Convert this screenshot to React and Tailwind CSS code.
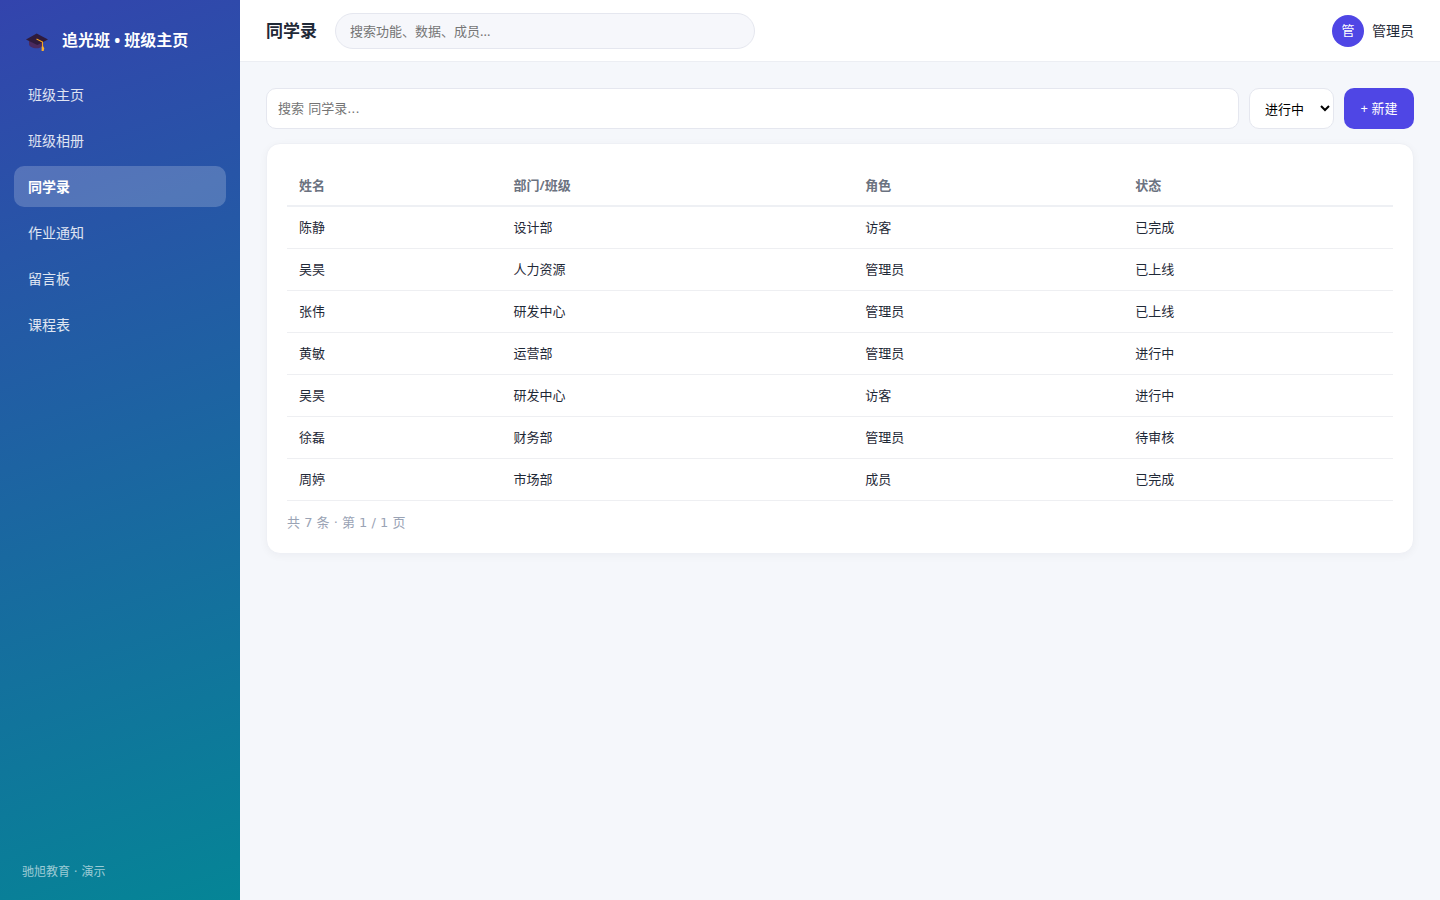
import { useState } from "react";

const NAV_ITEMS = [
  "班级主页",
  "班级相册",
  "同学录",
  "作业通知",
  "留言板",
  "课程表",
];

const COLUMNS = [
  { label: "姓名", className: "w-[19.4%]" },
  { label: "部门/班级", className: "w-[31.8%]" },
  { label: "角色", className: "w-[24.4%]" },
  { label: "状态", className: "w-[24.4%]" },
];

const ROWS = [
  ["陈静", "设计部", "访客", "已完成"],
  ["吴昊", "人力资源", "管理员", "已上线"],
  ["张伟", "研发中心", "管理员", "已上线"],
  ["黄敏", "运营部", "管理员", "进行中"],
  ["吴昊", "研发中心", "访客", "进行中"],
  ["徐磊", "财务部", "管理员", "待审核"],
  ["周婷", "市场部", "成员", "已完成"],
];

function GraduationCapIcon({ className }) {
  return (
    <svg className={className} viewBox="0 -2 24 22" aria-hidden="true">
      <path d="M4 9v4c0 2.6 3.5 4.2 7.5 4.2S18 15.6 18 13V9z" fill="#4b2a5e" />
      <path d="M1 8.5 11.7 2.5 23 8.5 12.3 14z" fill="#2f1b3c" />
      <path
        d="M11.5 8 17.5 11v6"
        fill="none"
        stroke="#f5a623"
        strokeWidth="1.1"
        strokeLinejoin="round"
      />
      <path d="M16.700 15.500h1.700l.8 2-.6 3h-2z" fill="#fbb12d" />
    </svg>
  );
}

function Sidebar({ active, onSelect }) {
  return (
    <aside className="flex w-60 shrink-0 flex-col bg-[linear-gradient(160deg,#3344ad,#058596)] px-3.5 py-5 text-white">
      <div className="flex h-10 items-center gap-[13px] px-[11px]">
        <GraduationCapIcon className="h-[22px] w-6 shrink-0" />
        <span className="text-base font-bold whitespace-nowrap">
          追光班 • 班级主页
        </span>
      </div>

      <nav className="mt-3.5 flex flex-1 flex-col gap-[5px]">
        {NAV_ITEMS.map((item) => (
          <a
            key={item}
            href="#"
            onClick={(e) => {
              e.preventDefault();
              onSelect(item);
            }}
            aria-current={item === active ? "page" : undefined}
            className={[
              "rounded-[10px] px-3.5 py-2.5 text-sm leading-[21px]",
              item === active
                ? "bg-white/20 font-bold text-white"
                : "text-white/85 hover:bg-white/10",
            ].join(" ")}
          >
            {item}
          </a>
        ))}
      </nav>

      <p className="px-2 font-['DejaVu_Sans','Noto_Sans_CJK_SC',sans-serif] text-xs text-white/60">
        驰旭教育 · 演示
      </p>
    </aside>
  );
}

function Topbar({ title }) {
  return (
    <header className="flex items-center gap-[18px] border-b border-[#eceef3] bg-white px-[26px] pt-[13px] pb-3">
      <h1 className="text-[17px] leading-6 font-bold">{title}</h1>
      <input
        type="search"
        aria-label="全局搜索"
        placeholder="搜索功能、数据、成员..."
        className="h-9 w-[420px] rounded-full border border-[#e5e7ef] bg-[#f6f7fb] px-3.5 text-[13px] outline-none placeholder:text-[#757575]"
      />
      <div className="ml-auto flex items-center gap-2">
        <span className="grid h-8 w-8 place-items-center rounded-full bg-[#4f46e5] text-[13px] text-white">
          管
        </span>
        <span className="text-sm">管理员</span>
      </div>
    </header>
  );
}

function Toolbar({ title }) {
  const [status, setStatus] = useState("进行中");

  return (
    <div className="flex h-[41px] gap-2.5">
      <input
        type="search"
        aria-label={`搜索${title}`}
        placeholder={`搜索 ${title}...`}
        className="min-w-0 flex-1 rounded-[10px] border border-[#e5e7ef] bg-white px-[11px] font-['DejaVu_Sans','Noto_Sans_CJK_SC',sans-serif] text-[13px] outline-none placeholder:text-[#757575]"
      />
      <select
        aria-label="状态"
        value={status}
        onChange={(e) => setStatus(e.target.value)}
        className="w-[85px] rounded-[10px] border border-[#e5e7ef] bg-white pl-[11px] text-[13px] text-black"
      >
        <option>进行中</option>
        <option>已完成</option>
        <option>已上线</option>
        <option>待审核</option>
      </select>
      <button
        type="button"
        className="w-[70px] rounded-[10px] bg-[#4f46e5] text-[13px] text-white"
      >
        + 新建
      </button>
    </div>
  );
}

function MemberTable() {
  return (
    <section className="mt-3.5 rounded-[14px] border border-[#eef0f5] bg-white p-5 shadow-[0_2px_8px_rgba(20,30,60,0.04)]">
      <table className="w-full table-fixed text-left text-[13px] leading-5">
        <thead>
          <tr className="h-[42px] border-b-2 border-[#eef0f4] text-[#6b7280]">
            {COLUMNS.map((col) => (
              <th
                key={col.label}
                scope="col"
                className={`px-3 font-semibold ${col.className}`}
              >
                {col.label}
              </th>
            ))}
          </tr>
        </thead>
        <tbody>
          {ROWS.map((row, i) => (
            <tr key={i} className="h-[42px] border-b border-[#eeeff2]">
              {row.map((cell, j) => (
                <td key={j} className="px-3">
                  {cell}
                </td>
              ))}
            </tr>
          ))}
        </tbody>
      </table>
      <p className="mt-3 font-['DejaVu_Sans','Noto_Sans_CJK_SC',sans-serif] text-[13px] leading-5 text-[#9aa3b5]">
        共 7 条 · 第 1 / 1 页
      </p>
    </section>
  );
}

export default function App() {
  const [active, setActive] = useState("同学录");

  return (
    <div className="flex min-h-screen bg-[#f5f7fb] font-['Noto_Sans','Noto_Sans_CJK_SC',sans-serif] text-[#1f2937]">
      <Sidebar active={active} onSelect={setActive} />
      <div className="min-w-0 flex-1">
        <Topbar title={active} />
        <main className="p-[26px]">
          <Toolbar title={active} />
          <MemberTable />
        </main>
      </div>
    </div>
  );
}
